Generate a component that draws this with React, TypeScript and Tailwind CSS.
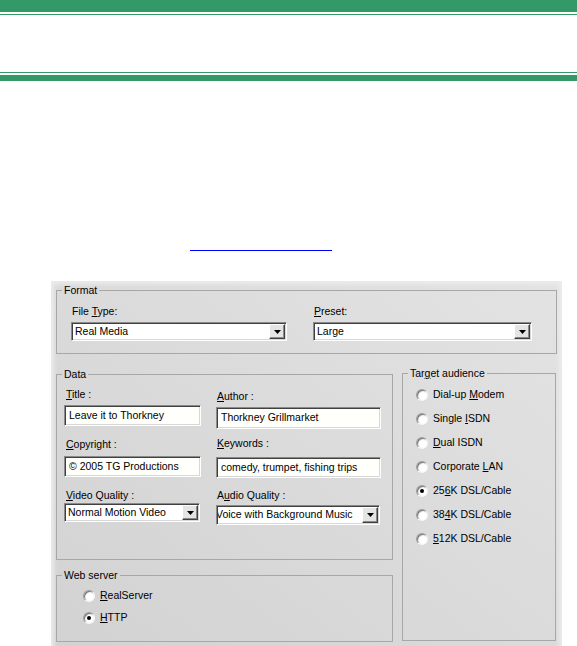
import type { ReactNode } from "react";

const GREEN = "bg-[#339966]";

function Key({ children }: { children: ReactNode }) {
  return <span className="underline decoration-1 underline-offset-[1px]">{children}</span>;
}

function Label({ children, className = "" }: { children: ReactNode; className?: string }) {
  return <div className={`h-[13px] leading-[13px] ${className}`}>{children}</div>;
}

const sunken =
  "border border-t-[#8a8a8a] border-l-[#8a8a8a] border-r-white border-b-white shadow-[inset_1px_1px_0_#404040,inset_-1px_-1px_0_#d8d8d8]";

function TextField({ value, width, height }: { value: string; width: number; height: number }) {
  return (
    <div
      className={`${sunken} flex items-center bg-[#fffffb] pl-[4px] whitespace-nowrap overflow-hidden`}
      style={{ width, height }}
    >
      {value}
    </div>
  );
}

function Select({
  value,
  width,
  height,
  scrolled,
}: {
  value: string;
  width: number;
  height: number;
  scrolled?: boolean;
}) {
  return (
    <div className={`${sunken} flex items-stretch bg-white p-[1px]`} style={{ width, height }}>
      <div className="flex flex-1 items-center overflow-hidden whitespace-nowrap pl-[2px]">
        <span className={scrolled ? "-ml-[4px]" : ""}>{value}</span>
      </div>
      <div className="flex w-[16px] shrink-0 items-center justify-center border border-t-white border-l-white border-r-[#404040] border-b-[#404040] bg-[#e4e4e4] shadow-[inset_-1px_-1px_0_#8a8a8a]">
        <svg width="7" height="4" viewBox="0 0 7 4">
          <path d="M0 0h7L3.5 4z" fill="#000" />
        </svg>
      </div>
    </div>
  );
}

function Radio({ checked, children }: { checked?: boolean; children: ReactNode }) {
  return (
    <div className="flex h-[13px] items-center gap-[5px] leading-[13px]">
      <span className="flex h-[12px] w-[12px] shrink-0 items-center justify-center rounded-full border border-t-[#9a9a9a] border-l-[#9a9a9a] border-r-[#f4f4f4] border-b-[#f4f4f4] bg-white shadow-[inset_1px_1px_1px_#6e6e6e]">
        {checked ? <span className="h-[4px] w-[4px] rounded-full bg-black" /> : null}
      </span>
      <span>{children}</span>
    </div>
  );
}

function Group({
  title,
  className = "",
  children,
}: {
  title: ReactNode;
  className?: string;
  children: ReactNode;
}) {
  return (
    <fieldset className={`min-w-0 border border-[#a7a7a7] px-0 ${className}`}>
      <legend className="ml-[5px] px-[2px] leading-[13px]">{title}</legend>
      {children}
    </fieldset>
  );
}

export default function App() {
  return (
    <div
      className="h-[646px] w-[577px] overflow-hidden bg-white text-[10.5px] text-black"
      style={{ fontFamily: '"Liberation Sans", Arial, sans-serif' }}
    >
      {/* header rules */}
      <div className={`h-[12px] ${GREEN}`} />
      <div className={`mt-[2px] h-px ${GREEN}`} />
      <div className="h-[57px]" />
      <div className={`h-px ${GREEN}`} />
      <div className={`mt-[2px] h-[6px] ${GREEN}`} />

      {/* link underline */}
      <div className="ml-[190px] mt-[169px] h-px w-[142px] bg-[#0000ff]" />

      {/* dialog */}
      <div className="ml-[51px] mt-[30px] h-[380px] w-[511px] bg-gradient-to-bl from-[#e3e3e3] to-[#d2d2d2] px-[5px] pt-[3px] shadow-[inset_0_0_4px_3px_#ececec]">
        <Group title="Format" className="h-[70px]">
          <div className="flex gap-[26px] pl-[14px] pt-[8px]">
            <div>
              <Label className="pl-[1px]">
                File <Key>T</Key>ype:
              </Label>
              <div className="mt-[4px]">
                <Select value="Real Media" width={216} height={19} />
              </div>
            </div>
            <div>
              <Label className="pl-[1px]">
                <Key>P</Key>reset:
              </Label>
              <div className="mt-[4px]">
                <Select value="Large" width={219} height={19} />
              </div>
            </div>
          </div>
        </Group>

        <div className="mt-[14px] flex items-start gap-[9px]">
          <div className="w-[337px]">
            <Group title="Data" className="h-[192px]">
              <div className="flex gap-[15px] pl-[7px]">
                <div className="w-[137px] pt-[7px]">
                  <Label className="pl-[2px]">
                    <Key>T</Key>itle :
                  </Label>
                  <div className="mt-[4px]">
                    <TextField value="Leave it to Thorkney" width={137} height={21} />
                  </div>
                  <Label className="mt-[12px] pl-[2px]">
                    <Key>C</Key>opyright :
                  </Label>
                  <div className="mt-[5px]">
                    <TextField value="© 2005 TG Productions" width={137} height={21} />
                  </div>
                  <Label className="mt-[12px] pl-[2px]">
                    <Key>V</Key>ideo Quality :
                  </Label>
                  <div className="mt-[1px]">
                    <Select value="Normal Motion Video" width={136} height={19} />
                  </div>
                </div>
                <div className="w-[165px] pt-[9px]">
                  <Label className="pl-[1px]">
                    <Key>A</Key>uthor :
                  </Label>
                  <div className="mt-[4px]">
                    <TextField value="Thorkney Grillmarket" width={165} height={22} />
                  </div>
                  <Label className="mt-[8px] pl-[1px]">
                    <Key>K</Key>eywords :
                  </Label>
                  <div className="mt-[7px]">
                    <TextField value="comedy, trumpet, fishing trips" width={165} height={21} />
                  </div>
                  <Label className="mt-[11px] pl-[1px]">
                    A<Key>u</Key>dio Quality :
                  </Label>
                  <div className="mt-[3px]">
                    <Select value="Voice with Background Music" width={164} height={20} scrolled />
                  </div>
                </div>
              </div>
            </Group>

            <Group title="Web server" className="mt-[9px] h-[73px]">
              <div className="flex flex-col gap-[9px] pl-[26px] pt-[7px]">
                <Radio>
                  <Key>R</Key>ealServer
                </Radio>
                <Radio checked>
                  <Key>H</Key>TTP
                </Radio>
              </div>
            </Group>
          </div>

          <Group
            title={
              <>
                Tar<Key>g</Key>et audience
              </>
            }
            className="-mt-px h-[274px] w-[154px]"
          >
            <div className="flex flex-col gap-[11px] pl-[13px] pt-[8px]">
              <Radio>
                Dial-up <Key>M</Key>odem
              </Radio>
              <Radio>
                Single <Key>I</Key>SDN
              </Radio>
              <Radio>
                <Key>D</Key>ual ISDN
              </Radio>
              <Radio>
                Corporate <Key>L</Key>AN
              </Radio>
              <Radio checked>
                25<Key>6</Key>K DSL/Cable
              </Radio>
              <Radio>
                38<Key>4</Key>K DSL/Cable
              </Radio>
              <Radio>
                <Key>5</Key>12K DSL/Cable
              </Radio>
            </div>
          </Group>
        </div>
      </div>
    </div>
  );
}
